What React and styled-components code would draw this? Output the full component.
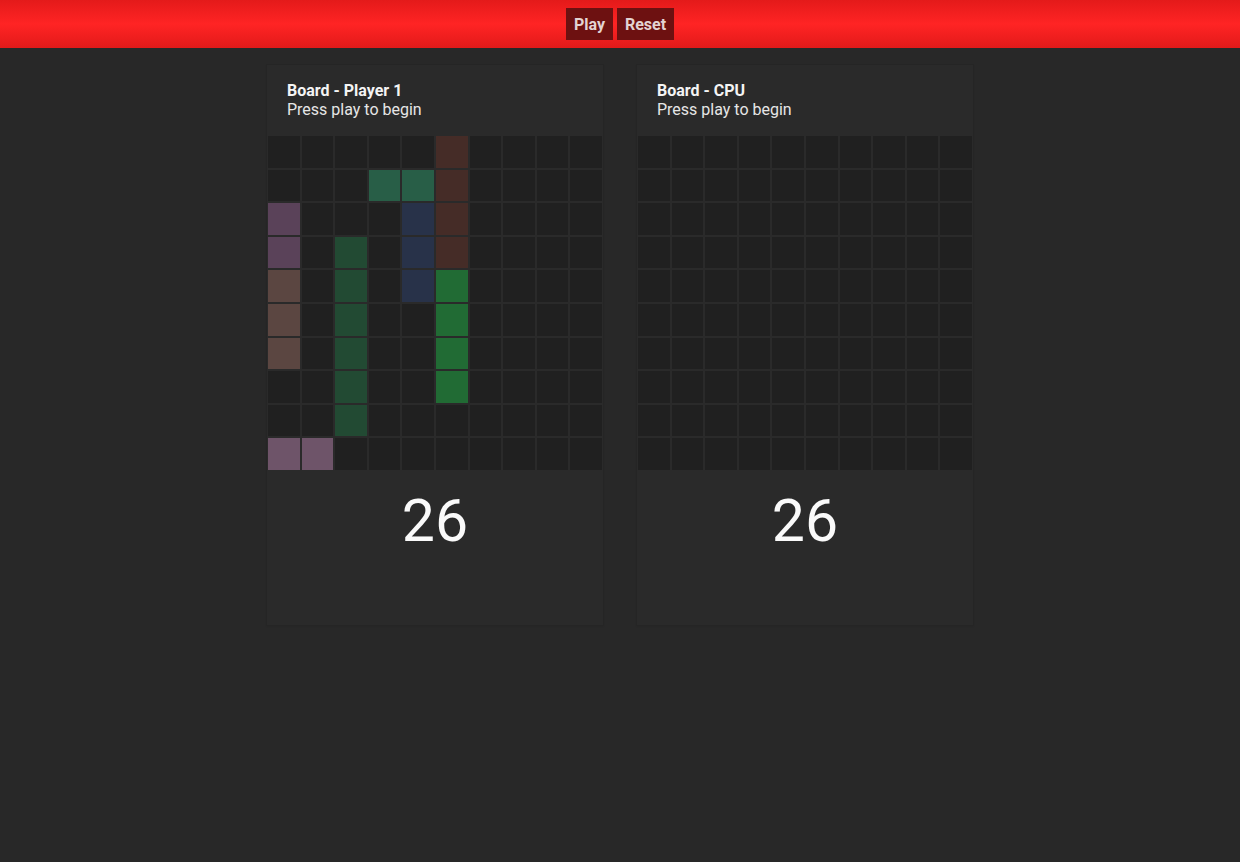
import React from "react";
import styled, { createGlobalStyle } from "styled-components";

const Global = createGlobalStyle`
  html, body { margin: 0; padding: 0; background: #282828; }
  body { font-family: Roboto, "Liberation Sans", sans-serif; color: #fff; min-height: 862px; }
`;

const Header = styled.header`
  height: 48px;
  display: flex;
  align-items: center;
  justify-content: center;
  gap: 4px;
  background: linear-gradient(to bottom, #e41a1a 0%, #ff2424 50%, #e21a1a 100%);
`;

const Button = styled.button`
  height: 32px;
  padding: 0 8px;
  border: none;
  border-radius: 0;
  background: #6d1111;
  color: #e3d3d3;
  font-family: Roboto, "Liberation Sans", sans-serif;
  font-weight: 700;
  font-size: 16px;
  cursor: pointer;
`;

const Main = styled.main`
  display: flex;
  justify-content: center;
  gap: 34px;
  padding-top: 17px;
`;

const Card = styled.section`
  width: 336px;
  box-sizing: border-box;
  background: #2a2a2a;
  box-shadow: 0 0 0 1px #252525, 0 1px 2px rgba(0, 0, 0, 0.15);
  display: flex;
  flex-direction: column;
  height: 560px;
`;

const CardHeader = styled.div`
  padding: 16px 20px;
  font-size: 16px;
  line-height: 19px;
`;

const Title = styled.div`
  font-weight: 700;
  color: #f4f4f4;
`;

const Subtitle = styled.div`
  color: #e6e6e6;
`;

const Grid = styled.div`
  display: grid;
  grid-template-columns: repeat(10, 1fr);
  grid-auto-rows: 33.6px;
`;

const Cell = styled.div`
  box-sizing: border-box;
  border: 1px solid #2a2a2a;
  background: ${(p) => p.$color || "#202020"};
`;

const Score = styled.div`
  text-align: center;
  font-size: 59px;
  font-weight: 400;
  color: #fafafa;
  padding-top: 15px;
`;

const C = {
  r: "#452c27",
  t: "#285e47",
  p: "#5a4259",
  b: "#283249",
  d: "#224a33",
  g: "#216b34",
  n: "#5b4641",
  k: "#6e5469",
};

const playerMap = [
  ".....r....",
  "...ttr....",
  "p...br....",
  "p.d.br....",
  "n.d.bg....",
  "n.d..g....",
  "n.d..g....",
  "..d..g....",
  "..d.......",
  "kk........",
];

const emptyMap = Array.from({ length: 10 }, () => "..........");

function Board({ title, map }) {
  return (
    <Card>
      <CardHeader>
        <Title>{title}</Title>
        <Subtitle>Press play to begin</Subtitle>
      </CardHeader>
      <Grid>
        {map.flatMap((row, r) =>
          row.split("").map((ch, c) => <Cell key={`${r}-${c}`} $color={C[ch]} />)
        )}
      </Grid>
      <Score>26</Score>
    </Card>
  );
}

export default function App() {
  return (
    <>
      <Global />
      <Header>
        <Button>Play</Button>
        <Button>Reset</Button>
      </Header>
      <Main>
        <Board title="Board - Player 1" map={playerMap} />
        <Board title="Board - CPU" map={emptyMap} />
      </Main>
    </>
  );
}
